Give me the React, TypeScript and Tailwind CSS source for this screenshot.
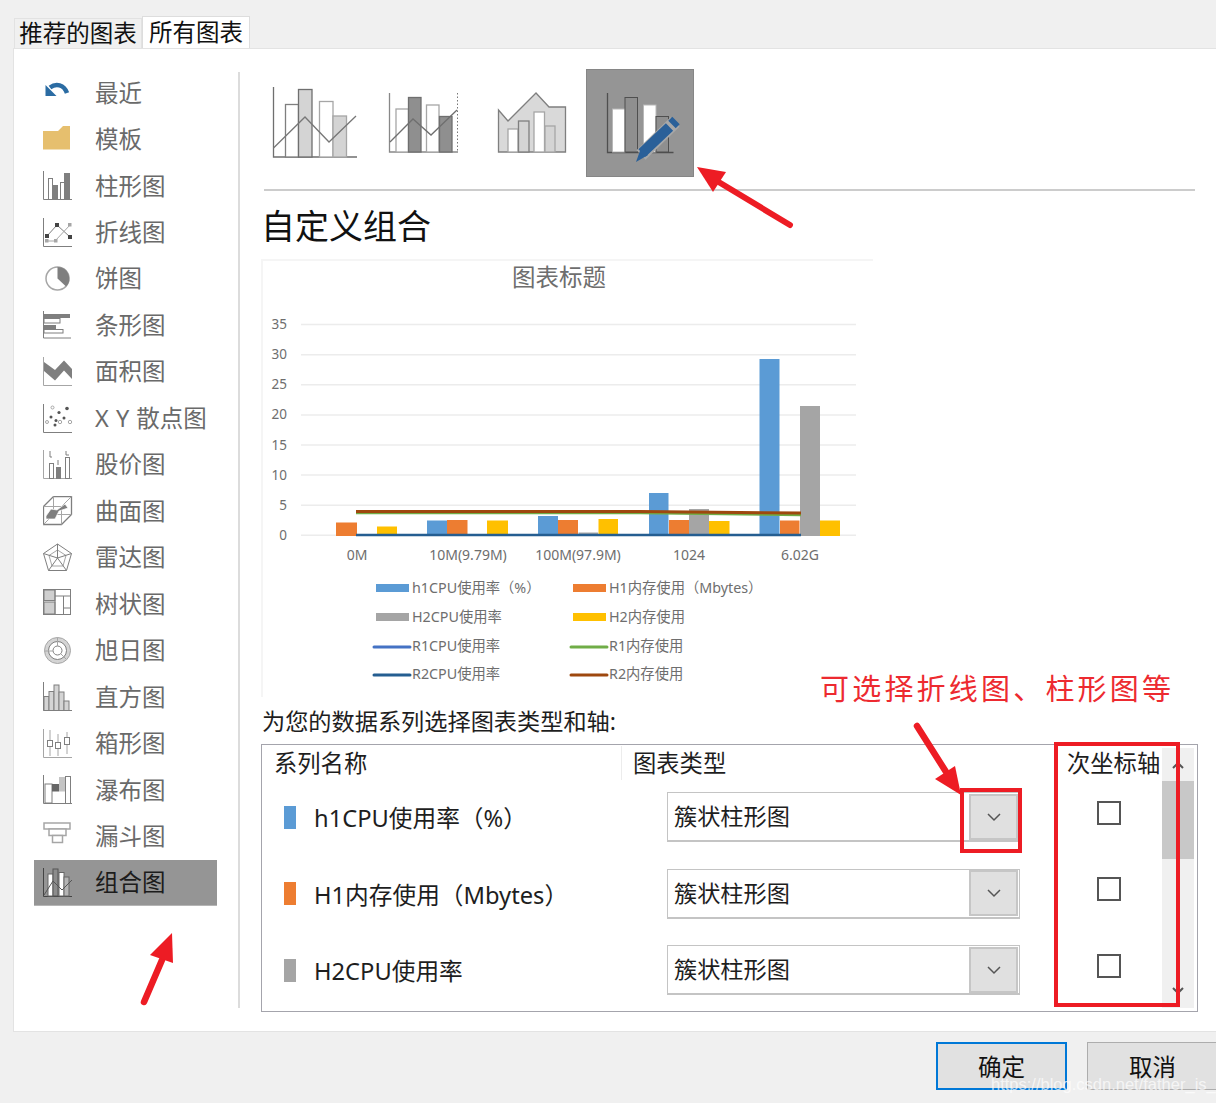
import React from "react";

const D = "#7f7f7f";
const M = "#a6a6a6";
const L = "#d4d4d4";

const axis = (c = D) => <path d="M.5 0V28.5H29" fill="none" stroke={c} strokeWidth="1" />;

const sideIcons: Record<string, React.ReactNode> = {
  recent: (
    <g>
      <path d="M7 9.5C13 5 21 6.5 24 15" fill="none" stroke="#2b6ca3" strokeWidth="4.5" />
      <path d="M2.5 7V18H13.5Z" fill="#2b6ca3" />
    </g>
  ),
  folder: <path d="M0 6H15L20 1H27V24.5H0Z" fill="#e6bf6e" />,
  column: (
    <g>
      {axis()}
      <rect x="5.5" y="7.5" width="4" height="21" fill="#fff" stroke={D} />
      <rect x="9.5" y="14.5" width="5" height="14" fill={D} stroke={D} />
      <rect x="17.5" y="11.5" width="4" height="17" fill="#fff" stroke={D} />
      <rect x="21.5" y="2.5" width="5" height="26" fill={D} stroke={D} />
    </g>
  ),
  line: (
    <g>
      {axis()}
      <path d="M4 18L14 7L27 19" fill="none" stroke={D} />
      <path d="M4 23H12L27 7" fill="none" stroke={M} />
      <rect x="2" y="16" width="4" height="4" fill="#444" />
      <rect x="12" y="5" width="4" height="4" fill="#444" />
      <rect x="25" y="17" width="4" height="4" fill="#444" />
      <rect x="2" y="21" width="3.5" height="3.5" fill={M} />
      <rect x="11" y="21" width="3.5" height="3.5" fill={M} />
      <rect x="25" y="5" width="3.5" height="3.5" fill={M} />
    </g>
  ),
  pie: (
    <g>
      <circle cx="14.5" cy="14.5" r="11.5" fill="#fff" stroke={M} strokeWidth="1.5" />
      <path d="M14.5 3A11.5 11.5 0 0 1 23 22.5L14.5 14.5Z" fill={D} />
    </g>
  ),
  bar: (
    <g>
      <path d="M.5 0V27H28" fill="none" stroke={D} />
      <rect x="1" y="3" width="26" height="4" fill={D} />
      <rect x="1" y="7.5" width="16" height="4.5" fill="#fff" stroke={D} />
      <rect x="1" y="14" width="12" height="4.5" fill={D} />
      <rect x="1" y="18.5" width="19" height="3.5" fill="#fff" stroke={D} />
    </g>
  ),
  area: (
    <g>
      <path d="M.5 0V28.5H29" fill="none" stroke={M} />
      <path d="M1 5L12 13L21 3.500L29 12V22L21 13.500L12 23.500L1 14Z" fill={D} />
    </g>
  ),
  scatter: (
    <g>
      {axis()}
      <g fill="#555">
        <circle cx="8" cy="13" r="1.500" />
        <circle cx="16" cy="8.500" r="1.600" />
        <circle cx="24" cy="4.500" r="1.800" />
        <circle cx="13" cy="16.500" r="1.500" />
        <circle cx="21" cy="14" r="1.500" />
        <circle cx="12" cy="21" r="1.500" />
      </g>
      <g fill="#fff" stroke={M}>
        <circle cx="9.500" cy="3.500" r="1.500" />
        <circle cx="4" cy="18" r="1.500" />
        <circle cx="17" cy="18" r="1.700" />
        <circle cx="27" cy="18" r="1.700" />
      </g>
    </g>
  ),
  stock: (
    <g>
      {axis(M)}
      <rect x="6.500" y="13.500" width="4" height="15" fill="#fff" stroke={D} />
      <rect x="13.500" y="17.500" width="4" height="11" fill={D} stroke={D} />
      <rect x="22.500" y="7.500" width="4" height="21" fill="#fff" stroke={D} />
      <path d="M7 1V7H9M15 10V15M23 1V5H26" fill="none" stroke={D} />
    </g>
  ),
  surface: (
    <g fill="none" stroke={D}>
      <path d="M.5 28.500V10.500L10.500 .5H28.500V18.500L18.500 28.500Z" strokeWidth="1.300" />
      <path d="M.5 10.500H18.500V28.500M18.500 10.500L28.500 .5M.5 28.500L10.500 18.500H28.500M10.500 .5V18.500" stroke={M} />
      <path d="M3 20L8 13L14 14L22 8L25 12L16 15L12 23L3 23Z" fill={D} stroke="#fff" strokeWidth=".7" />
    </g>
  ),
  radar: (
    <g fill="none" stroke={M}>
      <path d="M14.500 1L28.500 10.500L23.500 27.500H5.500L.5 10.500Z" stroke={D} />
      <path d="M14.500 7L23 12.500L20 23H9L6 12.500Z" />
      <path d="M14.500 1V15M28.500 10.500L14.500 15M.5 10.500L14.500 15M23.500 27.500L14.500 15M5.500 27.500L14.500 15" stroke={D} />
    </g>
  ),
  tree: (
    <g>
      <rect x=".5" y=".5" width="27" height="25" fill="#fff" stroke={D} />
      <rect x="1" y="1" width="11" height="10.500" fill="#cfcfcf" stroke={D} />
      <rect x="1" y="13" width="11" height="12" fill="#cfcfcf" stroke={D} />
      <path d="M12 1V25M12 7H27M20.500 7V25M20.500 19H27" fill="none" stroke={D} />
    </g>
  ),
  sun: (
    <g fill="none">
      <circle cx="14.500" cy="14.500" r="13" fill={L} stroke={M} />
      <circle cx="14.500" cy="14.500" r="9" fill="#fff" stroke={D} />
      <circle cx="14.500" cy="14.500" r="4.500" fill="#fff" stroke={D} />
      <path d="M14.500 1.500V10M23 23L18 18M1.500 15H10" stroke={M} />
    </g>
  ),
  histo: (
    <g>
      {axis()}
      <g fill={L} stroke={D}>
        <rect x="1" y="14.500" width="5" height="14" />
        <rect x="6" y="9.500" width="5" height="19" />
        <rect x="11" y="3" width="5" height="25.500" />
        <rect x="16" y="10" width="5" height="18.500" />
        <rect x="21" y="19" width="5" height="9.500" />
      </g>
    </g>
  ),
  box: (
    <g>
      <path d="M.5 0V28.500H29" fill="none" stroke={M} />
      <path d="M7 1V27M15 5V27M24 3V25" stroke={M} fill="none" />
      <rect x="4.500" y="11.500" width="5" height="6" fill="#fff" stroke={D} />
      <rect x="12.500" y="13.500" width="5" height="6" fill="#fff" stroke={D} />
      <rect x="21.500" y="8.500" width="5" height="7" fill="#fff" stroke={D} />
    </g>
  ),
  fall: (
    <g>
      {axis()}
      <rect x="2" y="9" width="7" height="19" fill="#fff" stroke={D} />
      <rect x="9" y="9" width="7" height="7.500" fill="#666" />
      <rect x="16" y="2" width="6" height="14.500" fill="#c4c4c4" />
      <rect x="22.500" y="1.500" width="5" height="27" fill="#fff" stroke={D} />
    </g>
  ),
  funnel: (
    <g fill="#fff" stroke={M} strokeWidth="1.500">
      <rect x="1" y="1" width="26" height="6" />
      <rect x="6" y="7" width="17" height="6.500" />
      <rect x="9.500" y="13.500" width="10" height="7" />
    </g>
  ),
  combo: (
    <g>
      <path d="M.5 0V28.500H29" fill="none" stroke="#444" />
      <rect x="5" y="6" width="5" height="22" fill="#fff" stroke="#666" />
      <rect x="10" y="1" width="5" height="27" fill="#8c8c8c" stroke="#555" />
      <rect x="16" y="4.500" width="5" height="23.500" fill="#fff" stroke="#666" />
      <rect x="21" y="9" width="5" height="19" fill="#b4b4b4" stroke="#666" />
      <path d="M1 27L10 13L19 22L29 12" fill="none" stroke="#555" />
    </g>
  ),
};

const categories: [string, string][] = [
  ["recent", "最近"],
  ["folder", "模板"],
  ["column", "柱形图"],
  ["line", "折线图"],
  ["pie", "饼图"],
  ["bar", "条形图"],
  ["area", "面积图"],
  ["scatter", "X Y 散点图"],
  ["stock", "股价图"],
  ["surface", "曲面图"],
  ["radar", "雷达图"],
  ["tree", "树状图"],
  ["sun", "旭日图"],
  ["histo", "直方图"],
  ["box", "箱形图"],
  ["fall", "瀑布图"],
  ["funnel", "漏斗图"],
  ["combo", "组合图"],
];

function Category({ icon, label }: { icon: string; label: string }) {
  const on = icon === "combo";
  return (
    <div
      className={
        on
          ? "flex h-[46.47px] items-center pl-[9px] text-[23.5px] text-[#1c1c1c] bg-[#959595] border-b border-[#b5b5b5]"
          : "flex h-[46.47px] items-center pl-[9px] text-[23.5px] text-[#6a6a6a]"
      }
    >
      <svg width="30" height="30" viewBox="0 0 30 30" className="shrink-0">
        {sideIcons[icon]}
      </svg>
      <span className="ml-[22px] whitespace-nowrap [word-spacing:1px]">{label}</span>
    </div>
  );
}

function ComboPreviews() {
  return (
    <div className="flex h-[108px]">
      <svg width="108" height="108" viewBox="262 69 108 108" className="shrink-0">
        <path d="M273.500 87V157H357" fill="none" stroke="#6f6f6f" strokeWidth="1.300" />
        <rect x="285.500" y="104.500" width="13" height="52.500" fill="#fff" stroke={D} strokeWidth="1.300" />
        <rect x="298.500" y="89.500" width="13.500" height="67.500" fill={L} stroke="#6f6f6f" strokeWidth="1.300" />
        <rect x="319.500" y="101.500" width="13.500" height="55.500" fill="#fff" stroke={M} strokeWidth="1.300" />
        <rect x="333" y="116" width="13.500" height="41" fill={L} stroke={M} strokeWidth="1.300" />
        <path d="M273.500 148L305 117L329 142L356 116" fill="none" stroke="#777" strokeWidth="1.300" />
      </svg>
      <svg width="108" height="108" viewBox="370 69 108 108" className="shrink-0">
        <path d="M389.500 93V152H458" fill="none" stroke="#888" strokeWidth="1.300" />
        <path d="M457.500 93V152" fill="none" stroke="#777" strokeDasharray="1.500 2" />
        <rect x="396" y="109" width="12.500" height="43" fill="#fff" stroke={M} strokeWidth="1.300" />
        <rect x="408.500" y="97.500" width="12.500" height="54.500" fill="#8f8f8f" stroke="#6f6f6f" strokeWidth="1.300" />
        <rect x="426.500" y="105" width="12.500" height="47" fill="#fff" stroke={M} strokeWidth="1.300" />
        <rect x="439.500" y="116.500" width="12.500" height="35.500" fill="#8f8f8f" stroke="#6f6f6f" strokeWidth="1.300" />
        <path d="M390 142L413 119L431 135L457 110" fill="none" stroke="#6f6f6f" strokeWidth="1.300" />
      </svg>
      <svg width="108" height="108" viewBox="478 69 108 108" className="shrink-0">
        <path d="M498.500 110L508 121L536 93L549 107H565.500V152H498.500Z" fill="#d9d9d9" stroke={D} strokeWidth="1.300" />
        <rect x="508" y="129" width="10" height="23" fill="#fff" stroke={M} strokeWidth="1.300" />
        <rect x="518.500" y="121" width="10.500" height="31" fill={L} stroke={D} strokeWidth="1.300" />
        <rect x="534" y="112" width="10.500" height="40" fill="#fff" stroke={M} strokeWidth="1.300" />
        <rect x="545" y="126" width="10" height="26" fill={L} stroke={M} strokeWidth="1.300" />
      </svg>
      <svg width="108" height="108" viewBox="586 69 108 108" className="shrink-0 bg-[#959595]">
        <rect x="586.500" y="69.500" width="107" height="107" fill="none" stroke="#777" strokeDasharray="1 1" />
        <path d="M607.500 93V152.500H673.500" fill="none" stroke="#4f4f4f" strokeWidth="1.300" />
        <rect x="612.500" y="109" width="12.500" height="43" fill="#fff" stroke="#b8b8b8" />
        <rect x="625" y="97.500" width="12.500" height="54.500" fill="#8f8f8f" stroke="#4f4f4f" />
        <rect x="643.500" y="105" width="12.500" height="47" fill="#fff" stroke="#b8b8b8" />
        <rect x="656" y="116.500" width="12.500" height="35.500" fill="#8f8f8f" stroke="#4f4f4f" />
        <path d="M641 155L675 122" stroke="#a8a8a8" strokeWidth="13" />
        <path d="M642 153L669.500 127M672 124.500L676 120.500" stroke="#2a6099" strokeWidth="10.500" fill="none" />
        <path d="M636 162L641 148L648 155Z" fill="#2a6099" />
      </svg>
    </div>
  );
}

const grid = [35, 30, 25, 20, 15, 10, 5, 0];
const C_BLUE = "#5b9bd5";
const C_OR = "#ed7d31";
const C_GR = "#a5a5a5";
const C_YE = "#ffc000";
const bars: [number, number, number, string][] = [
  [336, 357, 522.5, C_OR],
  [377, 397, 526.5, C_YE],
  [427, 447, 520.5, C_BLUE],
  [447, 467.5, 520, C_OR],
  [487, 508, 520.5, C_YE],
  [538, 558, 516, C_BLUE],
  [558, 578, 520, C_OR],
  [578.500, 598, 532.500, C_GR],
  [598.500, 618, 519, C_YE],
  [649, 668.500, 493, C_BLUE],
  [669, 689, 520, C_OR],
  [689, 709, 509, C_GR],
  [709, 729.500, 521, C_YE],
  [759.500, 779.500, 359, C_BLUE],
  [780, 799.500, 520.500, C_OR],
  [800, 820, 406, C_GR],
  [820, 840, 520.500, C_YE],
];
const cats: [number, string][] = [
  [357, "0M"],
  [468, "10M(9.79M)"],
  [578, "100M(97.9M)"],
  [689, "1024"],
  [800, "6.02G"],
];
const legend: [number, number, string, string, boolean][] = [
  [375, 588, "h1CPU使用率（%）", C_BLUE, true],
  [572, 588, "H1内存使用（Mbytes）", C_OR, true],
  [375, 617, "H2CPU使用率", C_GR, true],
  [572, 617, "H2内存使用", C_YE, true],
  [375, 646, "R1CPU使用率", "#4472c4", false],
  [572, 646, "R1内存使用", "#70ad47", false],
  [375, 674, "R2CPU使用率", "#255e91", false],
  [572, 674, "R2内存使用", "#9e480e", false],
];

function Chart() {
  return (
    <div className="-ml-px h-[438px] w-[612px] border-t-2 border-l-2 border-[#f5f5f5]">
      <svg width="610" height="436" viewBox="263 261 610 436" className="block">
        <text x="559" y="285.500" textAnchor="middle" fontSize="23.500" fill="#6e6e6e">图表标题</text>
        {grid.map((g, i) => {
          const y = 324.6 + i * 30.1;
          return (
            <g key={g}>
              <line x1="301" x2="856" y1={y} y2={y} stroke="#ececec" strokeWidth="1.500" />
              <text x="287" y={y + 4.500} textAnchor="end" fontSize="13.500" fill="#6e6e6e">{g}</text>
            </g>
          );
        })}
        {bars.map(([a, b, t, c], i) => (
          <rect key={i} x={a} y={t} width={b - a} height={536 - t} fill={c} />
        ))}
        <line x1="356" x2="801" y1="535" y2="535" stroke="#255e91" strokeWidth="2.500" />
        <path d="M356 513H640L801 515" fill="none" stroke="#70ad47" strokeWidth="2.500" />
        <path d="M356 511.500H640L801 513" fill="none" stroke="#9e480e" strokeWidth="3" />
        {cats.map(([x, t]) => (
          <text key={t} x={x} y="560" textAnchor="middle" fontSize="14" fill="#6e6e6e">{t}</text>
        ))}
        {legend.map(([x, y, t, c, solid]) =>
          solid ? (
            <g key={t}>
              <rect x={x + 1} y={y - 4} width="33" height="8" fill={c} />
              <text x={x + 37} y={y + 5} fontSize="14.300" fill="#6e6e6e">{t}</text>
            </g>
          ) : (
            <g key={t}>
              <line x1={x - 1} x2={x + 35} y1={y + 1} y2={y + 1} stroke={c} strokeWidth="3" strokeLinecap="round" />
              <text x={x + 37} y={y + 5} fontSize="14.300" fill="#6e6e6e">{t}</text>
            </g>
          ),
        )}
      </svg>
    </div>
  );
}

function SeriesRow({ color, name }: { color: string; name: string }) {
  return (
    <div className="flex h-[76.5px] items-center">
      <div className="flex w-[405px] items-center pl-[22px]">
        <div className="h-[23px] w-[12px]" style={{ backgroundColor: color }} />
        <span className="ml-[18px] pt-[4px] text-[23.7px] whitespace-nowrap text-[#1e1e1e]">{name}</span>
      </div>
      <div className="flex h-[50px] w-[353px] items-center justify-between border border-b-2 border-[#c4c4c4] bg-white pr-px">
        <span className="ml-[6px] text-[23.2px] text-[#1e1e1e]">簇状柱形图</span>
        <div className="flex h-[46px] w-[49px] items-center justify-center border-2 border-[#c6c6c6] bg-[#e0e0e0]">
          <svg width="16" height="10" viewBox="0 0 16 10">
            <path d="M2 2L8 8L14 2" fill="none" stroke="#555" strokeWidth="1.500" />
          </svg>
        </div>
      </div>
      <div className="mb-[9px] ml-[77px] h-[24px] w-[24px] border-2 border-[#555] bg-white" />
    </div>
  );
}

function SeriesTable() {
  return (
    <div className="flex h-[268px] w-[937px] -ml-px border border-[#a4a4ac] bg-white">
      <div className="w-[900px]">
        <div className="flex h-[34px] items-center pt-[2px] text-[23.3px] text-[#1e1e1e]">
          <div className="w-[360px] border-r border-[#ececec] pl-[12px]">系列名称</div>
          <div className="w-[433px] pl-[11px]">图表类型</div>
          <div className="pl-[12px] whitespace-nowrap">次坐标轴</div>
        </div>
        <SeriesRow color="#5b9bd5" name="h1CPU使用率（%）" />
        <SeriesRow color="#ed7d31" name="H1内存使用（Mbytes）" />
        <SeriesRow color="#a5a5a5" name="H2CPU使用率" />
      </div>
      <div className="mt-[3px] flex h-[260px] w-[32px] flex-col bg-[#f0f0f0]">
        <div className="flex h-[33px] items-center justify-center">
          <svg width="14" height="10" viewBox="0 0 14 10">
            <path d="M2 8L7 3L12 8" fill="none" stroke="#555" strokeWidth="2" />
          </svg>
        </div>
        <div className="h-[78px] bg-[#c8c8c8]" />
        <div className="mt-auto flex h-[33px] items-center justify-center pb-[2px]">
          <svg width="14" height="10" viewBox="0 0 14 10">
            <path d="M2 2L7 7L12 2" fill="none" stroke="#555" strokeWidth="2" />
          </svg>
        </div>
      </div>
    </div>
  );
}

export default function App() {
  return (
    <div className="relative h-[1103px] w-[1216px] overflow-hidden bg-[#f0f0f0] [font-family:'Noto_Sans','Noto_Sans_CJK_SC',sans-serif]">
      <div className="flex h-[48px] items-end pl-[14px] text-[23.5px] leading-none text-[#111]">
        <div className="flex h-[30px] w-[128px] items-center justify-center border border-b-0 border-[#e2e2e2] bg-[#f0f0f0]">推荐的图表</div>
        <div className="flex h-[32px] w-[108px] items-center justify-center border border-b-0 border-[#dddddd] bg-white">所有图表</div>
      </div>
      <div className="ml-[13px] flex h-[984px] w-[1203px] border-t border-l border-[#e3e3e3] border-b bg-white pt-[23px]">
        <div className="h-[936px] w-[226px] shrink-0 border-r-2 border-[#dcdcdc] pr-[21px] pl-[20px]">
          <div className="-mt-[2px]">
            {categories.map(([i, l]) => (
              <Category key={i} icon={i} label={l} />
            ))}
          </div>
        </div>
        <div className="-mt-[3px] pl-[22px]">
          <ComboPreviews />
          <div className="mt-[12px] ml-[2px] h-[2px] w-[931px] bg-[#cccccc]" />
          <div className="-ml-px flex h-[68px] items-center pt-[2px] text-[34px] text-[#111]">自定义组合</div>
          <Chart />
          <div className="flex h-[47px] items-center pt-[2px] text-[23.2px] whitespace-nowrap text-[#1e1e1e]">为您的数据系列选择图表类型和轴:</div>
          <SeriesTable />
        </div>
      </div>
      <div className="flex justify-start gap-[20px] pt-[10px] pl-[936px] text-[23.5px] text-[#111]">
        <div className="flex h-[48px] w-[131px] shrink-0 items-center justify-center border-2 border-[#0078d7] bg-[#e1e1e1] pt-[3px]">确定</div>
        <div className="flex h-[48px] w-[131px] shrink-0 items-center justify-center border border-[#adadad] bg-[#e1e1e1] pt-[3px]">取消</div>
      </div>

      <svg width="1216" height="1103" className="pointer-events-none absolute inset-0" fill="none">
        <g stroke="#ed1c24" strokeLinecap="round">
          <path d="M790 225L712 178" strokeWidth="6" />
          <path d="M144 1002L162 960" strokeWidth="6.500" />
          <path d="M917 726L948 775" strokeWidth="6.500" />
        </g>
        <g fill="#ed1c24">
          <path d="M697 167L726 172L713 192Z" />
          <path d="M172 933L150 955L173 963Z" />
          <path d="M961 795L935 779L955 766Z" />
        </g>
        <g stroke="#ed1c24" strokeWidth="4">
          <rect x="962" y="790" width="58" height="61" />
          <rect x="1056" y="744" width="122" height="261" />
        </g>
      </svg>
      <div className="absolute top-[670px] left-[820px] text-[29px] leading-[38px] tracking-[3.2px] whitespace-nowrap text-[#ed2a30]">可选择折线图、柱形图等</div>
      <div className="absolute top-[1074px] left-[991px] text-[16.5px] leading-[20px] whitespace-nowrap text-white/70 [font-family:'Liberation_Sans',sans-serif]">https://blog.csdn.net/father_is_</div>
    </div>
  );
}
